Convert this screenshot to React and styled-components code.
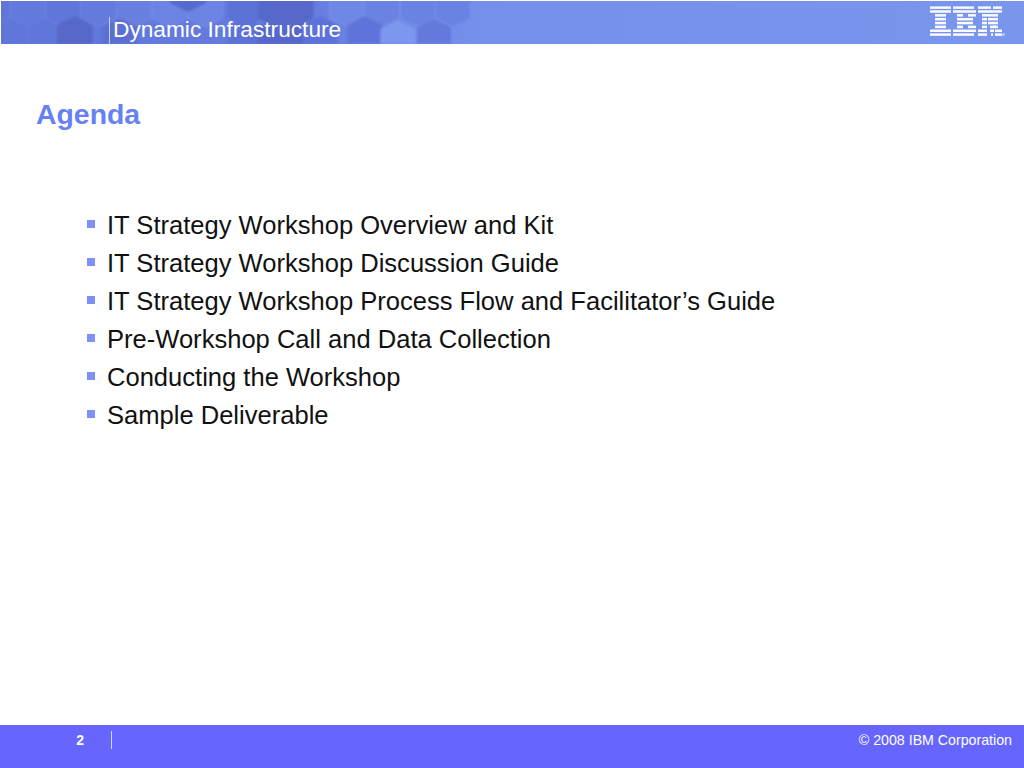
import React from "react";
import styled, { createGlobalStyle } from "styled-components";

const Global = createGlobalStyle`
  html, body { margin: 0; padding: 0; background: #fff; }
  body { font-family: "Liberation Sans", Arial, sans-serif; }
`;

const Slide = styled.div`
  width: 1024px;
  height: 768px;
  display: flex;
  flex-direction: column;
  overflow: hidden;
  background: #fff;
`;

const Header = styled.header`
  position: relative;
  height: 43px;
  margin: 1px 0 0 1px;
  flex: none;
  display: flex;
  align-items: flex-end;
  justify-content: space-between;
  overflow: hidden;
  background: linear-gradient(90deg, #6076d9 0%, #667de0 30%, #7490ea 46%, #7995ec 100%);
`;

const Pattern = styled.svg`
  position: absolute;
  left: -1px;
  top: -1px;
  filter: blur(0.9px);
`;

const HeaderTitle = styled.div`
  position: relative;
  margin-left: 108px;
  padding-left: 3px;
  height: 27px;
  border-left: 1px solid #c6cff5;
  color: #fff;
  font-size: 22.7px;
  line-height: 24px;
  white-space: nowrap;
`;

const Logo = styled.svg`
  position: relative;
  align-self: flex-start;
  margin: 5px 18px 0 0;
  filter: blur(0.4px);
`;

const Main = styled.main`
  flex: 1;
  padding: 54px 0 0 36px;
`;

const Heading = styled.h1`
  margin: 0;
  color: #6680f5;
  font-size: 28.4px;
  line-height: 32px;
  font-weight: 700;
`;

const Agenda = styled.ul`
  list-style: none;
  margin: 76px 0 0;
  padding: 0 0 0 51px;
`;

const Item = styled.li`
  display: flex;
  align-items: center;
  height: 38px;
  color: #111;
  font-size: 25.55px;
  white-space: nowrap;
`;

const Bullet = styled.span`
  flex: none;
  width: 8px;
  height: 8px;
  margin: -3px 12px 0 0;
  background: #7f8ff7;
`;

const Footer = styled.footer`
  height: 43px;
  flex: none;
  display: flex;
  align-items: flex-start;
  background: #6666ff;
  color: #fff;
`;

const PageNumber = styled.div`
  width: 84px;
  margin-top: 7px;
  text-align: right;
  font-size: 14px;
  line-height: 16px;
  font-weight: 700;
`;

const Divider = styled.div`
  width: 1px;
  height: 18px;
  margin: 6px 0 0 27px;
  background: #d3d6fb;
`;

const Copyright = styled.div`
  margin: 7px 12px 0 auto;
  font-size: 14.2px;
  line-height: 16px;
`;

const W = 35.4;
const hexPoints = (cx, top) => {
  const h = W / 2;
  return [
    [cx, top],
    [cx + h, top + 9],
    [cx + h, top + 27],
    [cx, top + 36],
    [cx - h, top + 27],
    [cx - h, top + 9],
  ]
    .map((p) => p.join(","))
    .join(" ");
};

const hexes = [
  [27.7, -9, "#6379dc", "#6e85e3"],
  [63, -9, "#6076d9", "#6e85e3"],
  [98.5, -9, "#647ADC", "#7288e6"],
  [134, -9, "#697fe0", "#7389e7"],
  [169.5, -9, "#6c83e3", "#7990ea"],
  [205, -9, "#6c83e3", "#7990ea"],
  [347, -9, "#6f88e6", "#7a92ea"],
  [382, -9, "#6a82e2", "#7a92ea"],
  [418, -9, "#6a82e2", "#7a92ea"],
  [453, -9, "#6a82e2", "#7a92ea"],
  [188, -24, "#5569cf", "none"],
  [10, 18, "#6076d9", "#6a80e0"],
  [45, 18, "#6076d9", "#6a80e0"],
  [75, 16, "#5669c9", "none"],
  [120, 18, "#5c70d2", "none"],
  [245, 18, "#5d72d6", "none"],
  [245, -9, "#5d72d6", "none"],
  [276, -9, "#5668ca", "none"],
  [276, 18, "#5668ca", "none"],
  [296, -9, "#5668ca", "none"],
  [296, 18, "#5668ca", "none"],
  [320, 16, "#5d72d8", "none"],
  [365, 16, "#5f74da", "none"],
  [398, 20, "#7d96ee", "none"],
  [434, 18, "#6379dc", "#7a92ea"],
];

const logoRows = [
  [[0, 21], [23, 44], [48, 61], [63, 72]],
  [[0, 21], [23, 46], [48, 62], [62, 72]],
  [[5, 16], [27, 33], [38, 46], [52, 63], [63, 68]],
  [[5, 16], [27, 43], [52, 57], [58, 63], [63, 68]],
  [[5, 16], [27, 43], [52, 57], [58, 68]],
  [[5, 16], [27, 33], [38, 46], [52, 57], [60, 66], [63, 68]],
  [[0, 21], [23, 46], [48, 57], [60, 64], [65, 72]],
  [[0, 21], [23, 44], [48, 57], [61, 63], [65, 72]],
];

const IbmLogo = () => (
  <Logo width="76" height="32" viewBox="0 0 76 32">
    {logoRows.map((row, r) =>
      row.map(([a, b], i) => (
        <rect key={`${r}-${i}`} x={a} y={r * 3.85 + 0.4} width={b - a} height="2.5" fill="#fff" opacity="0.95" />
      ))
    )}
    <circle cx="73.6" cy="28.6" r="1.4" fill="#c3cff5" />
  </Logo>
);

const items = [
  "IT Strategy Workshop Overview and Kit",
  "IT Strategy Workshop Discussion Guide",
  "IT Strategy Workshop Process Flow and Facilitator’s Guide",
  "Pre-Workshop Call and Data Collection",
  "Conducting the Workshop",
  "Sample Deliverable",
];

export default function App() {
  return (
    <Slide>
      <Global />
      <Header>
        <Pattern width="500" height="44" viewBox="0 0 500 44">
          {hexes.map(([cx, top, fill, stroke], i) => (
            <polygon key={i} points={hexPoints(cx, top)} fill={fill} stroke={stroke} strokeWidth="1" />
          ))}
        </Pattern>
        <HeaderTitle>Dynamic Infrastructure</HeaderTitle>
        <IbmLogo />
      </Header>
      <Main>
        <Heading>Agenda</Heading>
        <Agenda>
          {items.map((t) => (
            <Item key={t}>
              <Bullet />
              {t}
            </Item>
          ))}
        </Agenda>
      </Main>
      <Footer>
        <PageNumber>2</PageNumber>
        <Divider />
        <Copyright>© 2008 IBM Corporation</Copyright>
      </Footer>
    </Slide>
  );
}
